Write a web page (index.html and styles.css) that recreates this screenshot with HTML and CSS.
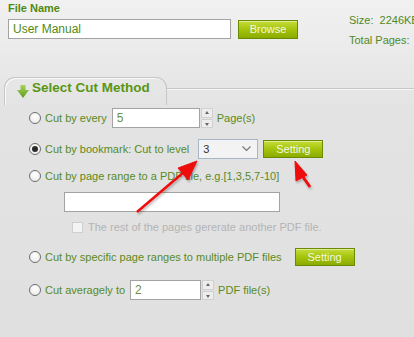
FILE: index.html
```html
<!DOCTYPE html>
<html lang="en">

<head>
    <meta charset="UTF-8">
    <meta name="viewport" content="width=device-width, initial-scale=1.0">
    <title>PDF Splitter</title>
    <link rel="stylesheet" href="styles.css">
</head>

<body>
    <div class="file-area">
        <div class="file-left">
            <div class="file-label">File Name</div>
            <div class="file-line">
                <input class="text-input file-input" type="text" value="User Manual">
                <button class="green-btn browse">Browse</button>
            </div>
        </div>
        <div class="file-info">
            <div>Size:&nbsp; 2246KB</div>
            <div>Total Pages:&nbsp; 35</div>
        </div>
    </div>

    <div class="tab-head">
        <div class="tab">
            <svg class="tab-icon" width="12" height="13" viewBox="0 0 12 13">
                <defs>
                    <linearGradient id="ag" x1="0" y1="0" x2="0" y2="1">
                        <stop offset="0" stop-color="#a9d35a" />
                        <stop offset="1" stop-color="#5f9a1c" />
                    </linearGradient>
                </defs>
                <path d="M3.5 0 H8.5 V5 H12 L6 13 L0 5 H3.5 Z" fill="url(#ag)" />
            </svg>
            <span>Select Cut Method</span>
        </div>
        <div class="tab-line"></div>
    </div>

    <div class="options">
        <div class="row row-every">
            <span class="radio"></span>
            <span class="opt-text">Cut by every</span>
            <input class="text-input num-every" type="text" value="5">
            <span class="spin"><i class="up"></i><i class="down"></i></span>
            <span class="opt-text unit">Page(s)</span>
        </div>

        <div class="row row-bookmark">
            <span class="radio checked"></span>
            <span class="opt-text">Cut by bookmark: Cut to level</span>
            <span class="select">3
                <svg class="chev" width="9" height="6" viewBox="0 0 9 6">
                    <path d="M0.5 0.5 L4.5 4.5 L8.5 0.5" fill="none" stroke="#777" stroke-width="1.2" />
                </svg>
            </span>
            <button class="green-btn setting">Setting</button>
        </div>

        <div class="row row-range">
            <span class="radio"></span>
            <span class="opt-text">Cut by page range to a PDF file, e.g.[1,3,5,7-10]</span>
        </div>

        <div class="row row-range-input">
            <input class="text-input range-input" type="text">
        </div>

        <div class="row row-rest">
            <span class="checkbox"></span>
            <span class="rest-text">The rest of the pages gererate another PDF file.</span>
        </div>

        <div class="row row-specific">
            <span class="radio"></span>
            <span class="opt-text">Cut by specific page ranges to multiple PDF files</span>
            <button class="green-btn setting setting-specific">Setting</button>
        </div>

        <div class="row row-average">
            <span class="radio"></span>
            <span class="opt-text">Cut averagely to</span>
            <input class="text-input num-average" type="text" value="2">
            <span class="spin"><i class="up"></i><i class="down"></i></span>
            <span class="opt-text unit">PDF file(s)</span>
        </div>
    </div>

    <!-- red annotation arrows drawn over the form -->
    <svg class="marks" width="414" height="337" viewBox="0 0 414 337">
        <defs>
            <filter id="sh" x="-20%" y="-20%" width="140%" height="140%">
                <feDropShadow dx="1" dy="2" stdDeviation="1.2" flood-color="#000" flood-opacity="0.25" />
            </filter>
        </defs>
        <g filter="url(#sh)" fill="#ee1111" stroke="#ee1111">
            <line x1="137" y1="212" x2="184" y2="172" stroke-width="2.6" />
            <path d="M197 161 L188 180 L178 168 Z" stroke-width="1" />
            <line x1="310" y1="187" x2="301" y2="174" stroke-width="3" />
            <path d="M295 161 L307 175 L296 181 Z" stroke-width="1" />
        </g>
    </svg>
</body>

</html>
```

FILE: styles.css
```css
body {
    margin: 0;
    width: 414px;
    height: 337px;
    overflow: hidden;
    position: relative;
    font-family: 'Liberation Sans', Arial, sans-serif;
    font-size: 11px;
    color: #5a8a22;
    background: linear-gradient(#f1f1f1, #e3e3e3 110px, #e0e0e0);
}

.file-area {
    display: flex;
    padding: 2px 0 0 8px;
    height: 77px;
    box-sizing: border-box;
}

.file-label {
    font-weight: bold;
    font-size: 11px;
    color: #4f8a14;
    height: 17px;
}

.file-line {
    display: flex;
    align-items: center;
}

.text-input {
    box-sizing: border-box;
    height: 20px;
    border: 1px solid #a3a3a3;
    background: #fff;
    padding: 0 4px;
    font-family: 'Liberation Sans', Arial, sans-serif;
    font-size: 12px;
    color: #6b8f3a;
    outline: none;
}

.file-input {
    width: 223px;
    color: #4f8a14;
}

.green-btn {
    box-sizing: border-box;
    width: 60px;
    height: 19px;
    padding: 0;
    border: 1px solid #6a8a00;
    background: linear-gradient(#c6dd3a, #a4c40c 50%, #8cab00);
    box-shadow: inset 0 1px 0 rgba(255, 255, 255, 0.45);
    color: #f4f8e0;
    font-family: 'Liberation Sans', Arial, sans-serif;
    font-size: 11px;
}

.browse {
    margin-left: 7px;
}

.file-info {
    margin-left: 51px;
    padding-top: 8px;
    line-height: 20px;
    color: #4f8a26;
    white-space: nowrap;
}

.tab-head {
    display: flex;
    align-items: flex-start;
    height: 28px;
}

.tab {
    margin-left: 4px;
    width: 163px;
    height: 28px;
    box-sizing: border-box;
    border: 1px solid #c6c6c6;
    border-bottom: none;
    border-radius: 11px 11px 0 0;
    box-shadow: inset 1px 1px 0 #fafafa;
    display: flex;
    align-items: flex-start;
    padding: 2px 0 0 12px;
    font-weight: bold;
    font-size: 13.5px;
    color: #5a9614;
}

.tab-icon {
    margin: 5px 3px 0 0;
}

.tab-line {
    flex: 1;
    margin-top: 11px;
    border-top: 1px solid #c6c6c6;
    box-shadow: 0 1px 0 #f6f6f6;
}

.options {
    padding-left: 29px;
    font-size: 11px;
}

.row {
    display: flex;
    align-items: center;
    height: 20px;
    white-space: nowrap;
}

.row-every {
    margin-top: 3px;
}

.row-bookmark {
    margin-top: 11px;
}

.row-range {
    margin-top: 8px;
    height: 18px;
}

.row-range-input {
    margin-top: 7px;
    padding-left: 35px;
}

.row-rest {
    margin-top: 7px;
    height: 16px;
    padding-left: 43px;
}

.row-specific {
    margin-top: 12px;
}

.row-average {
    margin-top: 13px;
}

.radio {
    box-sizing: border-box;
    width: 12px;
    height: 12px;
    border: 1px solid #6e6e6e;
    border-radius: 50%;
    background: radial-gradient(circle at 50% 35%, #ffffff, #e6e6e6);
    margin-right: 4px;
    position: relative;
}

.radio.checked::after {
    content: "";
    position: absolute;
    left: 2px;
    top: 2px;
    width: 6px;
    height: 6px;
    border-radius: 50%;
    background: #2a2a2a;
}

.opt-text {
    color: #5a8a22;
}

.num-every {
    width: 88px;
    margin-left: 5px;
}

.num-average {
    width: 71px;
    margin-left: 5px;
}

.spin {
    display: flex;
    flex-direction: column;
    gap: 1px;
    margin-left: 1px;
    height: 20px;
}

.spin i {
    box-sizing: border-box;
    width: 12px;
    height: 9.5px;
    border: 1px solid #d0d0d0;
    background: #ededed;
    position: relative;
}

.spin i::after {
    content: "";
    position: absolute;
    left: 3px;
    border-left: 2.5px solid transparent;
    border-right: 2.5px solid transparent;
}

.spin .up::after {
    top: 2px;
    border-bottom: 3px solid #666;
}

.spin .down::after {
    top: 3px;
    border-top: 3px solid #666;
}

.unit {
    margin-left: 4px;
}

.select {
    box-sizing: border-box;
    width: 60px;
    height: 20px;
    margin-left: 9px;
    border: 1px solid #a6b7c9;
    background: #f3f3f3;
    color: #333;
    padding-left: 4px;
    display: flex;
    align-items: center;
    justify-content: space-between;
}

.chev {
    margin-right: 6px;
}

.setting {
    margin-left: 5px;
    height: 18px;
}

.setting-specific {
    margin-left: 13px;
}

.range-input {
    width: 216px;
}

.checkbox {
    box-sizing: border-box;
    width: 11px;
    height: 11px;
    border: 1px solid #cfcfcf;
    background: #f4f4f4;
    margin-right: 5px;
}

.rest-text {
    color: #b4b4b4;
    font-size: 11px;
}

.marks {
    position: absolute;
    left: 0;
    top: 0;
    pointer-events: none;
}
```
